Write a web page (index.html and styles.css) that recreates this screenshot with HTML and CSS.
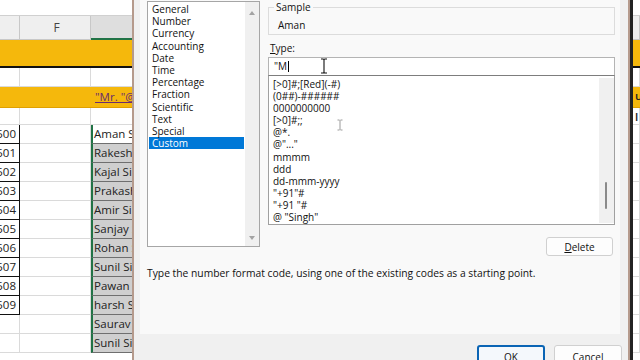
FILE: index.html
```html
<!DOCTYPE html>
<html>
<head>
<meta charset="utf-8">
<link rel="stylesheet" href="styles.css">
</head>
<body>
<div class="screen">
  <div class="sheet">
    <div class="row r-top"><div class="c"></div><div class="c"></div><div class="c"></div><div class="c"></div></div>
    <div class="row r-head"><div class="c h"></div><div class="c h">F</div><div class="c h hsel"></div><div class="c h"></div></div>
    <div class="row r-gold1"><div class="c"></div><div class="c"></div><div class="c"></div><div class="c cj"></div></div>
    <div class="row r-plain"><div class="c"></div><div class="c"></div><div class="c"></div><div class="c cj"></div></div>
    <div class="row r-gold2"><div class="c"></div><div class="c"></div><div class="c"><span class="mr">"Mr. "@</span></div><div class="c cj">u</div></div>
    <div class="row r-plain2"><div class="c"></div><div class="c"></div><div class="c"></div><div class="c cj">l</div></div>
    <div class="row d"><div class="c e">500</div><div class="c"></div><div class="c g act">Aman Singh</div><div class="c"></div></div>
    <div class="row d"><div class="c e">501</div><div class="c"></div><div class="c g">Rakesh Singh</div><div class="c"></div></div>
    <div class="row d"><div class="c e">502</div><div class="c"></div><div class="c g">Kajal Singh</div><div class="c"></div></div>
    <div class="row d"><div class="c e">503</div><div class="c"></div><div class="c g">Prakash Singh</div><div class="c"></div></div>
    <div class="row d"><div class="c e">504</div><div class="c"></div><div class="c g">Amir Singh</div><div class="c"></div></div>
    <div class="row d"><div class="c e">505</div><div class="c"></div><div class="c g">Sanjay Singh</div><div class="c"></div></div>
    <div class="row d"><div class="c e">506</div><div class="c"></div><div class="c g">Rohan Singh</div><div class="c"></div></div>
    <div class="row d"><div class="c e">507</div><div class="c"></div><div class="c g">Sunil Singh</div><div class="c"></div></div>
    <div class="row d"><div class="c e">508</div><div class="c"></div><div class="c g">Pawan Singh</div><div class="c"></div></div>
    <div class="row d"><div class="c e">509</div><div class="c"></div><div class="c g">harsh Singh</div><div class="c"></div></div>
    <div class="row d"><div class="c"></div><div class="c"></div><div class="c g">Saurav Singh</div><div class="c"></div></div>
    <div class="row d"><div class="c"></div><div class="c"></div><div class="c g">Sunil Singh</div><div class="c"></div></div>
  </div>

  <div class="dialog">
    <div class="panel">
      <div class="top">
        <div class="catlist">
          <div class="items">
            <div class="it">General</div>
            <div class="it">Number</div>
            <div class="it">Currency</div>
            <div class="it">Accounting</div>
            <div class="it">Date</div>
            <div class="it">Time</div>
            <div class="it">Percentage</div>
            <div class="it">Fraction</div>
            <div class="it">Scientific</div>
            <div class="it">Text</div>
            <div class="it">Special</div>
            <div class="it sel">Custom</div>
          </div>
          <div class="vscroll">
            <span class="arr up"></span>
            <span class="arr down"></span>
          </div>
        </div>
        <div class="right">
          <fieldset class="sample">
            <legend>Sample</legend>
            <div class="sval">Aman</div>
          </fieldset>
          <div class="lbl"><u>T</u>ype:</div>
          <div class="input">"M<span class="caret"></span></div>
          <div class="types">
            <div class="titems">
              <div class="ti">[&gt;0]#;[Red](-#)</div>
              <div class="ti">(0##)-######</div>
              <div class="ti">0000000000</div>
              <div class="ti">[&gt;0]#;;</div>
              <div class="ti">@*.</div>
              <div class="ti">@"..."</div>
              <div class="ti">mmmm</div>
              <div class="ti">ddd</div>
              <div class="ti">dd-mmm-yyyy</div>
              <div class="ti">"+91"#</div>
              <div class="ti">"+91 "#</div>
              <div class="ti">@ "Singh"</div>
            </div>
            <div class="tscroll"><span class="thumb"></span></div>
          </div>
          <div class="btnrow"><button class="btn"><u>D</u>elete</button></div>
        </div>
      </div>
      <div class="desc">Type the number format code, using one of the existing codes as a starting point.</div>
    </div>
    <div class="footer">
      <button class="btn big ok">OK</button>
      <button class="btn big">Cancel</button>
    </div>
    <svg class="ibeam ib1" width="8" height="16" viewBox="0 0 8 16"><path d="M1 1h2.2q0.8 0 0.8 1V14q0 1-0.8 1H1M7 1H4.8q-0.8 0-0.8 1M7 15H4.8q-0.8 0-0.8-1" fill="none" stroke="#111" stroke-width="1.1"/></svg>
    <svg class="ibeam ib2" width="6" height="12" viewBox="0 0 6 12"><path d="M0.5 1h2M3.5 1h2M3 1V11M0.5 11h2M3.5 11h2" fill="none" stroke="#9a9a9a" stroke-width="1"/></svg>
  </div>
</div>
</body>
</html>
```
FILE: styles.css
```css
* { box-sizing: border-box; }
html, body { margin: 0; padding: 0; }
body { width: 640px; height: 360px; overflow: hidden; background: #fff; }
.screen { position: relative; width: 640px; height: 360px; overflow: hidden; }

/* spreadsheet */
.sheet { font-family: "Open Sans", "Liberation Sans", sans-serif; font-size: 11.5px; color: #222; }
.row { display: grid; grid-template-columns: 20px 71px 540px 1fr; }
.c { border-right: 1px solid #dadada; border-bottom: 1px solid #dadada; overflow: hidden; white-space: nowrap; }
.r-top { height: 16px; }
.r-top .c { border: none; border-bottom: 1px solid #d0d0d0; }
.r-head { height: 24px; background: #efefef; }
.r-head .h { border-right: 1px solid #c8c8c8; border-bottom: 1px solid #c8c8c8; text-align: center; line-height: 24px; font-size: 12px; color: #444; padding-left: 3px; }
.r-head .hsel { background: #dedede; border-bottom: 2px solid #217346; }
.r-gold1 { height: 28px; background: #f5b80c; }
.r-gold1 .c { border-right: none; border-bottom: 2px solid #111; }
.r-plain { height: 19px; }
.r-gold2 { height: 21px; background: #f5b80c; }
.r-gold2 .c { border-right: none; border-bottom: 1px solid #e0a000; }
.mr { display: block; padding-left: 4px; line-height: 19px; color: #6a2c70; text-decoration: underline; }
.r-plain2 { height: 17px; }
.cj { border-left: 2px solid #111; padding-left: 2px; line-height: 18px; font-weight: 600; }
.d { height: 19px; }
.d .c { line-height: 18px; }
.d .e { border: 1px solid #111; border-top: none; border-left: none; text-align: right; padding-right: 3px; direction: rtl; }
.d .g { background: #cfcfcf; border-left: 2px solid #217346; border-right: none; border-bottom: 1px solid #6f6f6f; padding-left: 1px; }
.d .g.act { background: #fff; }

/* dialog */
.dialog { position: absolute; left: 132px; top: 0; width: 498px; height: 360px; background: #f0f0f0; border-left: 2px solid #b59a8c; border-right: 2px solid #b59a8c; font-family: "Open Sans", "Noto Sans", sans-serif; font-size: 10px; color: #111; }
.dialog::after { content: ""; position: absolute; right: -5px; top: 0; width: 3px; height: 360px; background: #222; }
.panel { margin-left: 6px; width: 480px; height: 334px; background: #f9f9f9; padding: 0 5px 0 7px; }
.top { display: flex; gap: 8px; height: 256px; }

.catlist { margin-top: 1px; width: 113px; height: 246px; background: #fff; border: 1px solid #a6a6a6; display: flex; }
.items { flex: 1; padding: 1px 0 0 1px; }
.it { height: 12.2px; line-height: 12.2px; padding-left: 3px; }
.it.sel { background: #0078d7; color: #fff; margin-right: 1px; }
.vscroll { width: 14px; background: #f0f0f0; position: relative; }
.arr { position: absolute; left: 4px; width: 0; height: 0; border-left: 3.5px solid transparent; border-right: 3.5px solid transparent; }
.arr.up { top: 9px; border-bottom: 4px solid #a3a3a3; }
.arr.down { bottom: 6px; border-top: 4px solid #a3a3a3; }

.right { width: 347px; display: flex; flex-direction: column; }
.sample { margin: 1px 0 0; padding: 0 8px; height: 34px; border: 1px solid #dcdcdc; min-width: 0; }
.sample legend { padding: 0 2px; margin-left: -3px; line-height: 12px; }
.sval { margin-top: 6px; line-height: 12px; padding-left: 1px; }
.lbl { margin-top: 7px; line-height: 12px; padding-left: 2px; }
.lbl u { text-decoration-thickness: 1px; }
.input { margin-top: 3px; height: 18px; background: #fff; border: 1px solid #b4b4b4; border-bottom: none; padding-left: 5px; line-height: 17px; display: flex; align-items: center; }
.caret { display: inline-block; width: 1px; height: 11px; background: #000; margin-left: 1px; }
.types { height: 150px; background: #fff; border: 1px solid #a0a0a0; border-top: 1px solid #7d7d7d; display: flex; }
.titems { flex: 1; padding: 2px 0 0 4px; font-size: 10px; }
.ti { height: 12.1px; line-height: 12.1px; white-space: nowrap; }
.tscroll { width: 15px; background: #f0f0f0; position: relative; margin: 2px 0 1px; }
.thumb { position: absolute; left: 6px; top: 104px; width: 2px; height: 27px; background: #8a8a8a; border-radius: 1px; }
.btnrow { margin-top: 12px; display: flex; justify-content: flex-end; padding-right: 2px; }
.btn { font: inherit; color: #111; height: 19px; width: 67px; background: #fdfdfd; border: 1px solid #d0d0d0; border-radius: 3px; padding: 0; line-height: 16px; }
.desc { margin-top: 11px; line-height: 12px; font-size: 10.3px; }

.footer { display: flex; justify-content: flex-end; gap: 9px; padding: 11px 6px 0 0; }
.btn.big { height: 24px; width: 68px; }
.btn.ok { border: 2px solid #0a64b4; background: #f4f8fc; }

.ibeam { position: absolute; }
.ib1 { left: 186px; top: 58px; }
.ib2 { left: 203px; top: 119px; }
```
